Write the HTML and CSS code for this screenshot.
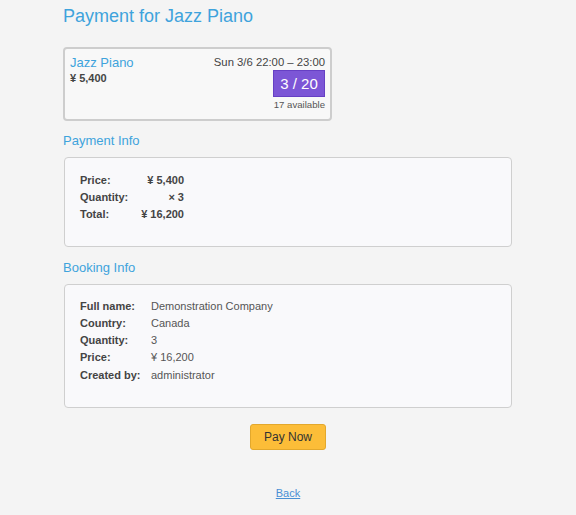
FILE: index.html
```html
<!DOCTYPE html>
<html>
<head>
<meta charset="utf-8">
<link rel="stylesheet" href="styles.css">
</head>
<body>
<div class="page">
  <h1 class="title">Payment for Jazz Piano</h1>
  <div class="event">
    <div class="event-left">
      <div class="event-name">Jazz Piano</div>
      <div class="event-price">¥ 5,400</div>
    </div>
    <div class="event-right">
      <div class="event-time">Sun 3/6 22:00 – 23:00</div>
      <div class="seats">3 / 20</div>
      <div class="avail">17 available</div>
    </div>
  </div>

  <h2 class="section">Payment Info</h2>
  <div class="panel pay-panel">
    <div class="pay-grid">
      <div class="lbl">Price:</div><div class="num">¥ 5,400</div>
      <div class="lbl">Quantity:</div><div class="num">× 3</div>
      <div class="lbl">Total:</div><div class="num">¥ 16,200</div>
    </div>
  </div>

  <h2 class="section">Booking Info</h2>
  <div class="panel book-panel">
    <div class="book-grid">
      <div class="lbl">Full name:</div><div class="val">Demonstration Company</div>
      <div class="lbl">Country:</div><div class="val">Canada</div>
      <div class="lbl">Quantity:</div><div class="val">3</div>
      <div class="lbl">Price:</div><div class="val">¥ 16,200</div>
      <div class="lbl">Created by:</div><div class="val">administrator</div>
    </div>
  </div>

  <div class="actions">
    <button class="pay-btn">Pay Now</button>
  </div>
  <div class="back-row">
    <a class="back" href="#">Back</a>
  </div>
</div>
</body>
</html>
```

FILE: styles.css
```css
html, body {
  margin: 0;
  padding: 0;
  background: #f4f4f4;
}
body {
  font-family: "Liberation Sans", Arial, sans-serif;
  color: #444;
}
.page {
  width: 450px;
  margin: 0 auto;
  padding-top: 5px;
}
.title {
  margin: 0;
  font-size: 18px;
  font-weight: normal;
  color: #3ea3dc;
  line-height: 22px;
}
.event {
  margin-top: 20px;
  width: 255px;
  border: 2px solid #cdcdcd;
  border-radius: 4px;
  background: #f8f8f8;
  display: flex;
  justify-content: space-between;
  padding: 6px 5px 8px 5px;
}
.event-name {
  font-size: 13px;
  color: #3ea3dc;
  line-height: 16px;
}
.event-price {
  font-size: 11px;
  font-weight: bold;
  color: #444;
  line-height: 14px;
}
.event-right {
  display: flex;
  flex-direction: column;
  align-items: flex-end;
}
.event-time {
  font-size: 11.3px;
  color: #444;
  line-height: 14px;
}
.seats {
  margin-top: 1px;
  width: 50px;
  height: 25px;
  background: #7c56d6;
  border: 1px solid #6640c4;
  color: #fff;
  font-size: 15px;
  line-height: 25px;
  text-align: center;
}
.avail {
  font-size: 9.6px;
  color: #555;
  line-height: 13px;
  margin-top: 1px;
}
.section {
  margin: 12px 0 0 0;
  font-size: 13px;
  font-weight: normal;
  color: #3ea3dc;
  line-height: 16px;
}
.panel {
  margin: 8px 1px 0 1px;
  border: 1px solid #cfcfcf;
  border-radius: 4px;
  background: #f9f9fb;
  padding: 13px 15px 14px 15px;
}
.pay-panel {
  height: 61px;
}
.book-panel {
  padding-top: 12px;
  height: 96px;
}
.pay-panel + .section {
  margin-top: 13px;
}
.pay-grid {
  display: grid;
  grid-template-columns: 60px 44px;
  grid-auto-rows: 17px;
  font-size: 11px;
  font-weight: bold;
  color: #444;
  align-items: center;
}
.pay-grid .num {
  text-align: right;
}
.book-grid {
  display: grid;
  grid-template-columns: 71px auto;
  grid-auto-rows: 17.25px;
  font-size: 11px;
  color: #444;
  align-items: center;
}
.lbl {
  font-weight: bold;
}
.val {
  color: #555;
}
.actions {
  display: flex;
  justify-content: center;
  margin-top: 16px;
}
.pay-btn {
  font-family: "Liberation Sans", Arial, sans-serif;
  font-size: 12px;
  color: #333;
  background: #fcbd38;
  border: 1px solid #e3a82c;
  border-radius: 3px;
  width: 76px;
  height: 26px;
  padding: 0;
}
.back-row {
  display: flex;
  justify-content: center;
  margin-top: 37px;
}
.back {
  font-size: 11px;
  color: #4a8fd4;
  text-decoration: underline;
}
```
